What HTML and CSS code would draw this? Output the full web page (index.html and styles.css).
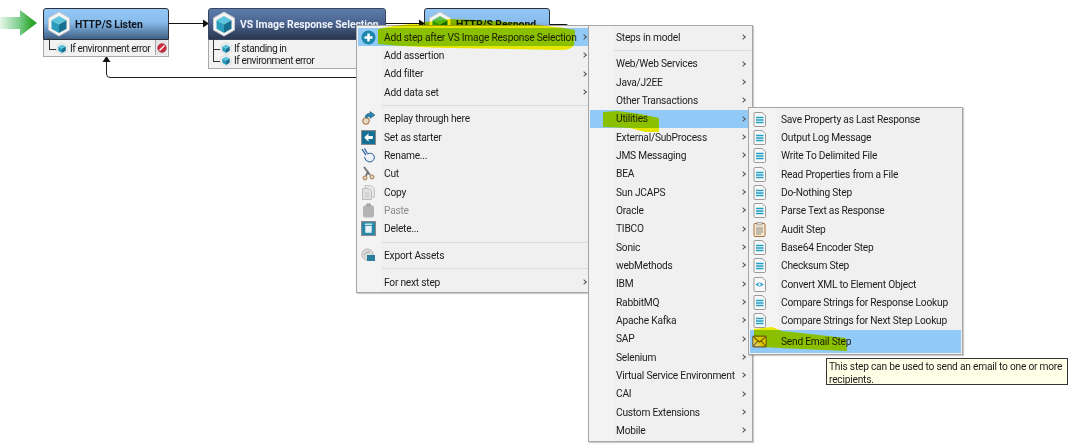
FILE: index.html
```html
<!DOCTYPE html>
<html lang="en">
<head>
<meta charset="utf-8">
<title>Add step menu</title>
<link rel="stylesheet" href="styles.css">
</head>
<body>
<svg class="defs" width="0" height="0">
  <defs>
    <linearGradient id="greenfade" x1="0" x2="1" y1="0" y2="0"><stop offset="0" stop-color="#e8f6ea"/><stop offset="0.5" stop-color="#80d090"/><stop offset="0.85" stop-color="#2fa82f"/><stop offset="1" stop-color="#22a022"/></linearGradient>
    <symbol id="cube" viewBox="0 0 24 26">
      <path d="M12 1l10.500 6v12L12 25 1.500 19V7z" fill="#f4f4f4" stroke="#c8c8c8"/>
      <path d="M12 5l7.500 4.200L12 13.500 4.500 9.200z" fill="#5cc4dc"/>
      <path d="M4.500 9.200L12 13.500V22l-7.500-4.300z" fill="#2a9cbc"/>
      <path d="M19.500 9.200L12 13.500V22l7.500-4.300z" fill="#176f90"/>
    </symbol>
    <symbol id="cubegreen" viewBox="0 0 24 26">
      <path d="M12 1l10.500 6v12L12 25 1.500 19V7z" fill="#f4f4f4" stroke="#c8c8c8"/>
      <path d="M12 5l7.500 4.200L12 13.500 4.500 9.200z" fill="#5cc05c"/>
      <path d="M4.500 9.200L12 13.500V22l-7.500-4.300z" fill="#2a9c3c"/>
      <path d="M19.500 9.200L12 13.500V22l7.500-4.300z" fill="#177030"/>
    </symbol>
    <symbol id="doc" viewBox="0 0 13 15">
      <path d="M1 1.500Q1 .5 2 .5h7l3.500 3v10q0 1-1 1H2q-1 0-1-1z" fill="#f8f8f8" stroke="#9a9a9a"/>
      <path d="M3 5.500h7.500M3 8h7.500M3 10.500h7.500" stroke="#1fa0c4" stroke-width="1.400"/>
    </symbol>
    <symbol id="eye" viewBox="0 0 13 15">
      <path d="M1 1.500Q1 .5 2 .5h7l3.500 3v10q0 1-1 1H2q-1 0-1-1z" fill="#f8f8f8" stroke="#9a9a9a"/>
      <path d="M2.500 7.500Q6.500 3.500 10.500 7.500 6.500 11.500 2.500 7.500z" fill="#2aa0c8"/>
      <circle cx="6.500" cy="7.500" r="1.200" fill="#fff"/>
    </symbol>
    <symbol id="audit" viewBox="0 0 13 15">
      <rect x="1" y="1.500" width="11" height="13" rx="1" fill="#f6ead4" stroke="#a8703c"/>
      <rect x="4" y=".5" width="5" height="2.500" fill="#ddd" stroke="#888" stroke-width=".6"/>
      <path d="M3 6h7M3 8h7M3 10h7M3 12h5" stroke="#8a8a7a"/>
    </symbol>
    <symbol id="mail" viewBox="0 0 14 12">
      <rect x=".7" y="1" width="12.600" height="10" rx="1" fill="#e8cf60" stroke="#6a6030"/>
      <path d="M1 1.500l6 5 6-5M1 10.500l4.500-5M13 10.500l-4.500-5" fill="none" stroke="#6a6030"/>
    </symbol>
    <symbol id="plus" viewBox="0 0 15 15">
      <circle cx="7.500" cy="7.500" r="7" fill="#1b87ad"/>
      <path d="M7.500 3.500v8M3.500 7.500h8" stroke="#fff" stroke-width="2.400"/>
    </symbol>
    <symbol id="replay" viewBox="0 0 15 15">
      <circle cx="5" cy="10" r="3.300" fill="#e8d8c0" stroke="#a06a3c"/>
      <path d="M4 6Q5 2 9 2.500V.5l5 3.500-5 3.500V5.500Q6.500 5 6 7z" fill="#2a86b0" stroke="#14506c" stroke-width=".5"/>
    </symbol>
    <symbol id="starter" viewBox="0 0 14 14">
      <rect x=".5" y=".5" width="13" height="13" fill="#136f96" stroke="#8a8a8a"/>
      <path d="M7 3L3 7l4 4V8.500h4v-3H7z" fill="#fff"/>
    </symbol>
    <symbol id="rename" viewBox="0 0 15 15">
      <path d="M1 1l5 8M3.500 .5L6 5" stroke="#2b5f9e" stroke-width="1.300" fill="none"/>
      <path d="M5.500 6Q12 3.500 13.500 9 13 14 8 14 4 13 3.500 9" fill="#eef2f8" stroke="#2b5f9e"/>
    </symbol>
    <symbol id="cut" viewBox="0 0 15 15">
      <path d="M3 1l6 8M7 5L5 10" stroke="#777" stroke-width="2"/>
      <circle cx="4" cy="12" r="2" fill="#e4d4c4" stroke="#a87a50"/>
      <circle cx="11" cy="11" r="2" fill="#e4d4c4" stroke="#a87a50"/>
    </symbol>
    <symbol id="copy" viewBox="0 0 14 15">
      <path d="M3.500 3V.5h6L13 4v8h-3" fill="#e6e6e6" stroke="#c4c4c4"/>
      <path d="M1 3.500h6l3 3v8H1z" fill="#e2e2e2" stroke="#bcbcbc"/>
      <path d="M3 8h5M3 10h5M3 12h5" stroke="#cacaca"/>
    </symbol>
    <symbol id="paste" viewBox="0 0 14 15">
      <rect x="1.500" y="2.500" width="11" height="12" rx="2" fill="#b4b4b4"/>
      <rect x="4.500" y=".5" width="5" height="3" rx="1" fill="#a4a4a4"/>
    </symbol>
    <symbol id="trash" viewBox="0 0 14 14">
      <rect x=".5" y=".5" width="13" height="13" fill="#2488a8" stroke="#8a8a8a"/>
      <path d="M4 4.500h6V11H4z" fill="#e8f2f6"/>
      <path d="M3.500 3h7" stroke="#e8f2f6" stroke-width="1.200"/>
    </symbol>
    <symbol id="export" viewBox="0 0 15 15">
      <circle cx="6.500" cy="6.500" r="5.500" fill="#dcdcdc" stroke="#b0b0b0"/>
      <rect x="6" y="7" width="8" height="6" fill="#2c7f9c"/>
      <path d="M3 7q3-4 6-3" fill="none" stroke="#a0a0a0"/>
    </symbol>
    <symbol id="stop" viewBox="0 0 12 12">
      <circle cx="6" cy="6" r="5" fill="#d8283c" stroke="#902030"/>
      <path d="M3 9l6-6" stroke="#fff" stroke-width="1.600"/>
    </symbol>
  </defs>
</svg>

<main class="canvas">
  <svg class="wires" width="1073" height="444" viewBox="0 0 1073 444">
    <path d="M0 17H20V10L37 23 20 36V29H0z" fill="url(#greenfade)"/>
    <path d="M169 23.500H203M385 23.500H420M550 24.500H566Q569 24.500 569 28V40" fill="none" stroke="#111"/>
    <path d="M203 19.500l6 4-6 4zM419 19.500l6 4-6 4z" fill="#111"/>
    <path d="M360 77.500H110Q106.500 77.500 106.500 74V61" fill="none" stroke="#222"/>
    <path d="M102.500 62l4-6 4 6z" fill="#111"/>
  </svg>

  <article class="node node-one">
    <header class="node-head head-light">
      <svg class="node-cube"><use href="#cube"/></svg>
      <span class="node-title">HTTP/S Listen</span>
    </header>
    <div class="node-body">
      <div class="step">
        <i class="elbow"></i><svg class="step-cube"><use href="#cube"/></svg><span>If environment error</span>
        <b class="badge"><svg class="badge-ico"><use href="#stop"/></svg></b>
      </div>
    </div>
  </article>

  <article class="node node-two">
    <header class="node-head head-dark">
      <svg class="node-cube"><use href="#cube"/></svg>
      <span class="node-title title-light">VS Image Response Selection</span>
    </header>
    <div class="node-body">
      <div class="step"><i class="elbow"></i><svg class="step-cube"><use href="#cube"/></svg><span>If standing in</span></div>
      <div class="step"><i class="elbow"></i><svg class="step-cube"><use href="#cube"/></svg><span>If environment error</span></div>
    </div>
  </article>

  <article class="node node-three">
    <header class="node-head head-light">
      <svg class="node-cube"><use href="#cubegreen"/></svg>
      <span class="node-title">HTTP/S Respond</span>
    </header>
  </article>

  <nav class="menu menu-main">
    <div class="item on"><svg class="ico"><use href="#plus"/></svg><span>Add step after VS Image Response Selection</span><i class="chev"></i></div>
    <div class="item"><span class="slot"></span><span>Add assertion</span><i class="chev"></i></div>
    <div class="item"><span class="slot"></span><span>Add filter</span><i class="chev"></i></div>
    <div class="item"><span class="slot"></span><span>Add data set</span><i class="chev"></i></div>
    <hr class="sep">
    <div class="item"><svg class="ico"><use href="#replay"/></svg><span>Replay through here</span></div>
    <div class="item"><svg class="ico"><use href="#starter"/></svg><span>Set as starter</span></div>
    <div class="item"><svg class="ico"><use href="#rename"/></svg><span>Rename...</span></div>
    <div class="item"><svg class="ico"><use href="#cut"/></svg><span>Cut</span></div>
    <div class="item"><svg class="ico"><use href="#copy"/></svg><span>Copy</span></div>
    <div class="item off"><svg class="ico"><use href="#paste"/></svg><span>Paste</span></div>
    <div class="item"><svg class="ico"><use href="#trash"/></svg><span>Delete...</span></div>
    <hr class="sep">
    <div class="item"><svg class="ico"><use href="#export"/></svg><span>Export Assets</span></div>
    <hr class="sep">
    <div class="item"><span class="slot"></span><span>For next step</span><i class="chev"></i></div>
  </nav>

  <nav class="menu menu-cats">
    <div class="item"><span class="slot"></span><span>Steps in model</span><i class="chev"></i></div>
    <hr class="sep">
    <div class="item"><span class="slot"></span><span>Web/Web Services</span><i class="chev"></i></div>
    <div class="item"><span class="slot"></span><span>Java/J2EE</span><i class="chev"></i></div>
    <div class="item"><span class="slot"></span><span>Other Transactions</span><i class="chev"></i></div>
    <div class="item on"><span class="slot"></span><span>Utilities</span><i class="chev"></i></div>
    <div class="item"><span class="slot"></span><span>External/SubProcess</span><i class="chev"></i></div>
    <div class="item"><span class="slot"></span><span>JMS Messaging</span><i class="chev"></i></div>
    <div class="item"><span class="slot"></span><span>BEA</span><i class="chev"></i></div>
    <div class="item"><span class="slot"></span><span>Sun JCAPS</span><i class="chev"></i></div>
    <div class="item"><span class="slot"></span><span>Oracle</span><i class="chev"></i></div>
    <div class="item"><span class="slot"></span><span>TIBCO</span><i class="chev"></i></div>
    <div class="item"><span class="slot"></span><span>Sonic</span><i class="chev"></i></div>
    <div class="item"><span class="slot"></span><span>webMethods</span><i class="chev"></i></div>
    <div class="item"><span class="slot"></span><span>IBM</span><i class="chev"></i></div>
    <div class="item"><span class="slot"></span><span>RabbitMQ</span><i class="chev"></i></div>
    <div class="item"><span class="slot"></span><span>Apache Kafka</span><i class="chev"></i></div>
    <div class="item"><span class="slot"></span><span>SAP</span><i class="chev"></i></div>
    <div class="item"><span class="slot"></span><span>Selenium</span><i class="chev"></i></div>
    <div class="item"><span class="slot"></span><span>Virtual Service Environment</span><i class="chev"></i></div>
    <div class="item"><span class="slot"></span><span>CAI</span><i class="chev"></i></div>
    <div class="item"><span class="slot"></span><span>Custom Extensions</span><i class="chev"></i></div>
    <div class="item"><span class="slot"></span><span>Mobile</span><i class="chev"></i></div>
  </nav>

  <nav class="menu menu-steps">
    <div class="item"><svg class="ico"><use href="#doc"/></svg><span>Save Property as Last Response</span></div>
    <div class="item"><svg class="ico"><use href="#doc"/></svg><span>Output Log Message</span></div>
    <div class="item"><svg class="ico"><use href="#doc"/></svg><span>Write To Delimited File</span></div>
    <div class="item"><svg class="ico"><use href="#doc"/></svg><span>Read Properties from a File</span></div>
    <div class="item"><svg class="ico"><use href="#doc"/></svg><span>Do-Nothing Step</span></div>
    <div class="item"><svg class="ico"><use href="#doc"/></svg><span>Parse Text as Response</span></div>
    <div class="item"><svg class="ico"><use href="#audit"/></svg><span>Audit Step</span></div>
    <div class="item"><svg class="ico"><use href="#doc"/></svg><span>Base64 Encoder Step</span></div>
    <div class="item"><svg class="ico"><use href="#doc"/></svg><span>Checksum Step</span></div>
    <div class="item"><svg class="ico"><use href="#eye"/></svg><span>Convert XML to Element Object</span></div>
    <div class="item"><svg class="ico"><use href="#doc"/></svg><span>Compare Strings for Response Lookup</span></div>
    <div class="item"><svg class="ico"><use href="#doc"/></svg><span>Compare Strings for Next Step Lookup</span></div>
    <div class="item on tall"><svg class="ico"><use href="#mail"/></svg><span>Send Email Step</span></div>
  </nav>

  <div class="tooltip">This step can be used to send an email to one or more recipients.</div>

  <svg class="marker" width="1073" height="444" viewBox="0 0 1073 444">
    <path d="M378 29Q392 26 410 24 L450 19 Q520 21 575 30 L574 45 Q572 50 560 50 L450 48 Q410 47 378 44z" fill="#f4f400"/>
    <path d="M603 112L618 111 640 114 659 118 659 132 645 132 630 128 603 127z" fill="#f4f400"/>
    <path d="M754 329L772 327 782 331 846 338 847 351 800 349 762 347 754 340z" fill="#f4f400"/>
  </svg>
</main>
</body>
</html>
```

FILE: styles.css
```css
* { box-sizing: border-box; }

html, body {
  margin: 0;
  padding: 0;
  background: #fff;
}

.defs { position: absolute; }

.canvas {
  position: relative;
  width: 1073px;
  height: 444px;
  overflow: hidden;
  font-family: Roboto, "Liberation Sans", sans-serif;
  font-size: 10.200px;
  letter-spacing: -0.220px;
  color: #1c1c1c;
}

.wires, .marker {
  position: absolute;
  left: 0;
  top: 0;
  pointer-events: none;
}

.marker { mix-blend-mode: multiply; }

/* diagram nodes */
.node { position: absolute; top: 8px; }
.node-one { left: 43px; width: 126px; }
.node-two { left: 208px; width: 178px; }
.node-three { left: 424px; width: 126px; }

.node-head {
  display: flex;
  align-items: center;
  gap: 4px;
  height: 32px;
  padding-left: 3px;
  border-radius: 3px 3px 0 0;
  border: 1px solid #2a2f3a;
}

.head-light { background: linear-gradient(#93c8f7 0%, #86bbea 45%, #3f5f85 100%); }
.head-dark { background: linear-gradient(#5d7cab 0%, #4c6591 45%, #28364f 100%); border-color: #3a4660; }

.node-cube { width: 24px; height: 26px; flex: none; }

.node-title {
  font-family: Roboto, sans-serif;
  font-weight: 700;
  font-size: 10.400px;
  letter-spacing: -0.050px;
  color: #10141c;
  white-space: nowrap;
}

.title-light { color: #eef3fa; }

.node-body {
  background: #f2f2f2;
  border: 1px solid #a8a8a8;
  border-top: 0;
  padding-top: 2px;
  padding-bottom: 1px;
}

.step {
  position: relative;
  display: flex;
  align-items: center;
  height: 12.500px;
  padding-left: 4px;
  white-space: nowrap;
  letter-spacing: -0.450px;
}

.node-one .step { height: 13px; }

.elbow {
  flex: none;
  width: 7px;
  height: 12px;
  margin-top: -9px;
  border-left: 1px solid #333;
  border-bottom: 1px solid #333;
}

.step-cube { width: 12px; height: 13px; flex: none; margin-right: 2px; }

.node-one .elbow { width: 7px; margin-left: 1px; }

.badge {
  position: absolute;
  right: 1px;
  top: -2px;
  width: 12px;
  height: 15px;
  display: flex;
  align-items: center;
  justify-content: center;
  background: #e4e4e4;
  border-left: 1px solid #aaa;
}

.badge-ico { width: 10px; height: 10px; }

/* context menus */
.menu {
  position: absolute;
  display: flex;
  flex-direction: column;
  padding: 2px 1px;
  background: #f0f0f0;
  border: 1px solid #a6a6a6;
  box-shadow: 1px 1px 1px rgba(90, 90, 90, .3);
}

.menu-main {
  left: 356px;
  top: 25px;
  width: 236px;
  height: 268px;
  background: linear-gradient(90deg, #f3f3f3 24px, #f0f0f0 24px);
}

.menu-cats {
  left: 588px;
  top: 25px;
  width: 165px;
  height: 417px;
  background: linear-gradient(90deg, #f3f3f3 24px, #f0f0f0 24px);
}

.menu-steps {
  left: 748px;
  top: 107px;
  width: 215px;
  height: 248px;
  background: linear-gradient(90deg, #f3f3f3 29px, #f0f0f0 29px);
}

.item {
  display: grid;
  grid-template-columns: 26px 1fr 10px;
  align-items: center;
  flex: none;
  height: 18.330px;
  white-space: nowrap;
}

.menu-main .item { grid-template-columns: 26px 1fr 8px; }
.menu-steps .item { grid-template-columns: 31px 1fr; }
.menu-steps .tall { height: 23px; margin-top: 0; }

.item.on { background: #91c9f7; }
.item.off { color: #8c8c8c; }

.ico {
  width: 15px;
  height: 15px;
  margin-left: 3px;
}

.menu-steps .ico { margin-left: 2px; }

.chev {
  width: 4px;
  height: 4px;
  border-top: 1px solid #555;
  border-right: 1px solid #555;
  transform: rotate(45deg);
}

.sep {
  flex: none;
  width: auto;
  height: 8.330px;
  margin: 0 0 0 24px;
  border: 0;
  background: linear-gradient(#dcdcdc, #dcdcdc) center / 100% 1px no-repeat;
}

/* tooltip */
.tooltip {
  position: absolute;
  left: 826px;
  top: 358px;
  width: 242px;
  height: 27px;
  padding: 1px 2px;
  background: #ffffe8;
  border: 1px solid #333;
  line-height: 13px;
}
```
